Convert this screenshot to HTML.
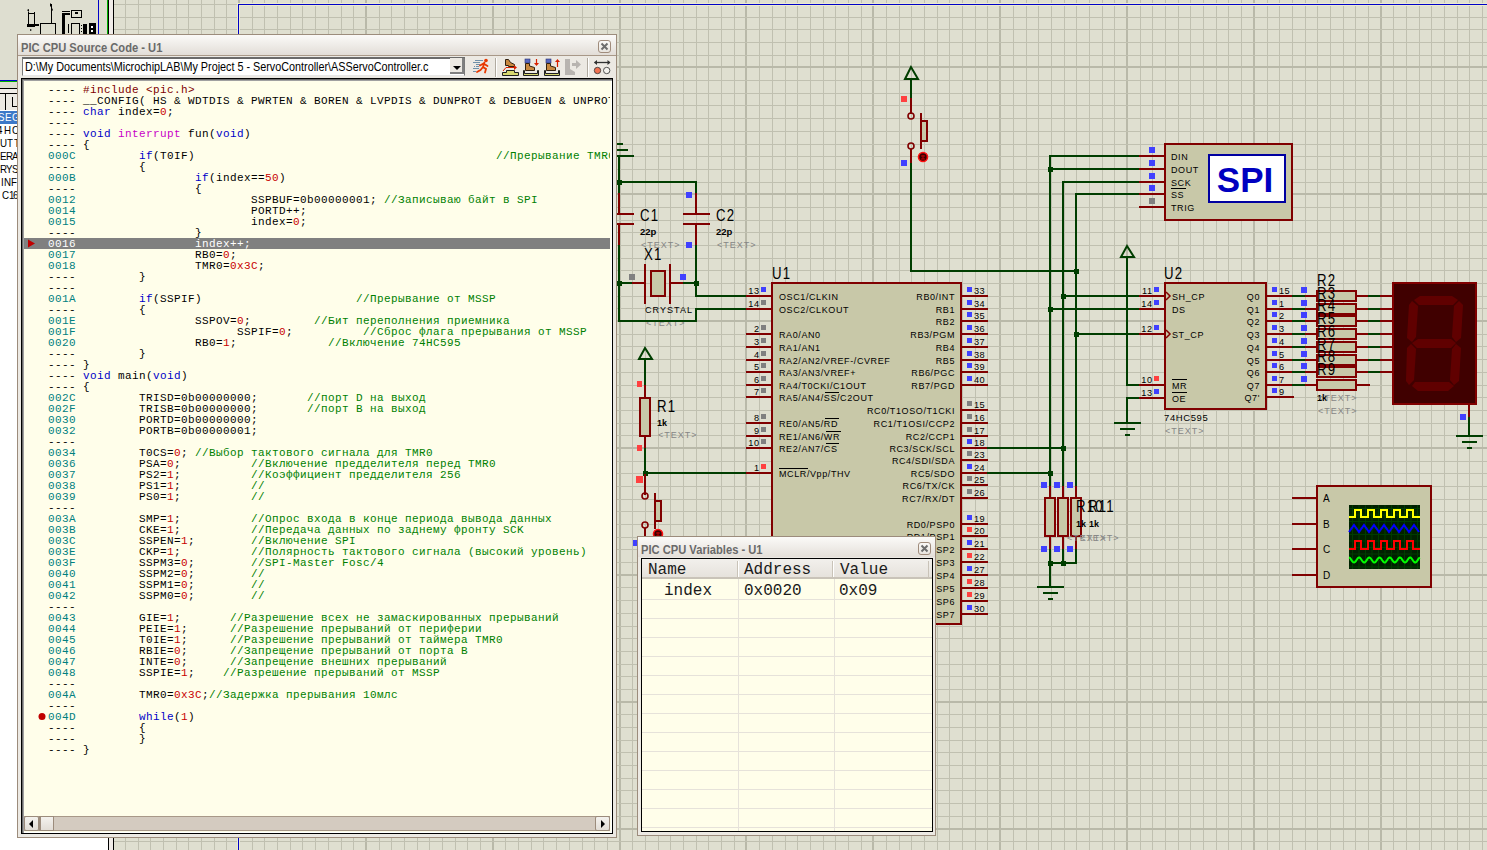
<!DOCTYPE html><html><head><meta charset="utf-8"><style>
*{margin:0;padding:0;box-sizing:border-box}
html,body{width:1487px;height:850px;overflow:hidden;background:#dfdfd0;font-family:"Liberation Sans",sans-serif}
.abs{position:absolute}
#sch{position:absolute;left:0;top:0}
.win{position:absolute;border:1px solid #9c8c7c;background:#ece9e3}
.ttl{position:absolute;font:bold 12px/14px "Liberation Sans",sans-serif;color:#6a6a6a;white-space:nowrap;transform:scaleX(0.93);transform-origin:0 0}
.code{position:absolute;left:21px;top:78px;width:592px;height:756px;background:#fffeea;border:1px solid #000;box-shadow:inset 1px 1px 0 #6a6a6a, inset 2px 2px 0 #a0a0a0, inset -1px -1px 0 #fff;overflow:hidden}
.cl{position:absolute;overflow:hidden;left:48px;width:562px;height:11px;white-space:pre;font:11px/11px "Liberation Mono",monospace;letter-spacing:0.4px;color:#000}
.cl.hl{color:#fff}
.cl.hl span{color:#fff!important}
.a{color:#008080}.k{color:#0000c8}.m{color:#c800c8}.n{color:#c80000}.c{color:#008000}.p{color:#800000}

.vt{position:absolute;font:16px/18px "Liberation Mono",monospace;color:#1a1a1a;white-space:pre}
.st{font-family:"Liberation Sans",sans-serif}
</style></head><body><svg id="sch" width="1487" height="850" viewBox="0 0 1487 850">
<rect x="111" y="0" width="2" height="850" fill="#b9b9a9"/>
<rect x="125" y="0" width="1" height="850" fill="#c0c0b0"/>
<rect x="138" y="0" width="1" height="850" fill="#c0c0b0"/>
<rect x="150" y="0" width="1" height="850" fill="#c0c0b0"/>
<rect x="163" y="0" width="1" height="850" fill="#c0c0b0"/>
<rect x="176" y="0" width="1" height="850" fill="#c0c0b0"/>
<rect x="188" y="0" width="1" height="850" fill="#c0c0b0"/>
<rect x="201" y="0" width="1" height="850" fill="#c0c0b0"/>
<rect x="214" y="0" width="1" height="850" fill="#c0c0b0"/>
<rect x="226" y="0" width="1" height="850" fill="#c0c0b0"/>
<rect x="238" y="0" width="2" height="850" fill="#b9b9a9"/>
<rect x="252" y="0" width="1" height="850" fill="#c0c0b0"/>
<rect x="264" y="0" width="1" height="850" fill="#c0c0b0"/>
<rect x="277" y="0" width="1" height="850" fill="#c0c0b0"/>
<rect x="290" y="0" width="1" height="850" fill="#c0c0b0"/>
<rect x="302" y="0" width="1" height="850" fill="#c0c0b0"/>
<rect x="315" y="0" width="1" height="850" fill="#c0c0b0"/>
<rect x="328" y="0" width="1" height="850" fill="#c0c0b0"/>
<rect x="341" y="0" width="1" height="850" fill="#c0c0b0"/>
<rect x="353" y="0" width="1" height="850" fill="#c0c0b0"/>
<rect x="365" y="0" width="2" height="850" fill="#b9b9a9"/>
<rect x="379" y="0" width="1" height="850" fill="#c0c0b0"/>
<rect x="391" y="0" width="1" height="850" fill="#c0c0b0"/>
<rect x="404" y="0" width="1" height="850" fill="#c0c0b0"/>
<rect x="417" y="0" width="1" height="850" fill="#c0c0b0"/>
<rect x="429" y="0" width="1" height="850" fill="#c0c0b0"/>
<rect x="442" y="0" width="1" height="850" fill="#c0c0b0"/>
<rect x="455" y="0" width="1" height="850" fill="#c0c0b0"/>
<rect x="467" y="0" width="1" height="850" fill="#c0c0b0"/>
<rect x="480" y="0" width="1" height="850" fill="#c0c0b0"/>
<rect x="492" y="0" width="2" height="850" fill="#b9b9a9"/>
<rect x="505" y="0" width="1" height="850" fill="#c0c0b0"/>
<rect x="518" y="0" width="1" height="850" fill="#c0c0b0"/>
<rect x="531" y="0" width="1" height="850" fill="#c0c0b0"/>
<rect x="543" y="0" width="1" height="850" fill="#c0c0b0"/>
<rect x="556" y="0" width="1" height="850" fill="#c0c0b0"/>
<rect x="569" y="0" width="1" height="850" fill="#c0c0b0"/>
<rect x="582" y="0" width="1" height="850" fill="#c0c0b0"/>
<rect x="594" y="0" width="1" height="850" fill="#c0c0b0"/>
<rect x="607" y="0" width="1" height="850" fill="#c0c0b0"/>
<rect x="619" y="0" width="2" height="850" fill="#b9b9a9"/>
<rect x="632" y="0" width="1" height="850" fill="#c0c0b0"/>
<rect x="645" y="0" width="1" height="850" fill="#c0c0b0"/>
<rect x="658" y="0" width="1" height="850" fill="#c0c0b0"/>
<rect x="670" y="0" width="1" height="850" fill="#c0c0b0"/>
<rect x="683" y="0" width="1" height="850" fill="#c0c0b0"/>
<rect x="696" y="0" width="1" height="850" fill="#c0c0b0"/>
<rect x="708" y="0" width="1" height="850" fill="#c0c0b0"/>
<rect x="721" y="0" width="1" height="850" fill="#c0c0b0"/>
<rect x="734" y="0" width="1" height="850" fill="#c0c0b0"/>
<rect x="745" y="0" width="2" height="850" fill="#b9b9a9"/>
<rect x="759" y="0" width="1" height="850" fill="#c0c0b0"/>
<rect x="772" y="0" width="1" height="850" fill="#c0c0b0"/>
<rect x="785" y="0" width="1" height="850" fill="#c0c0b0"/>
<rect x="797" y="0" width="1" height="850" fill="#c0c0b0"/>
<rect x="810" y="0" width="1" height="850" fill="#c0c0b0"/>
<rect x="823" y="0" width="1" height="850" fill="#c0c0b0"/>
<rect x="835" y="0" width="1" height="850" fill="#c0c0b0"/>
<rect x="848" y="0" width="1" height="850" fill="#c0c0b0"/>
<rect x="861" y="0" width="1" height="850" fill="#c0c0b0"/>
<rect x="872" y="0" width="2" height="850" fill="#b9b9a9"/>
<rect x="886" y="0" width="1" height="850" fill="#c0c0b0"/>
<rect x="899" y="0" width="1" height="850" fill="#c0c0b0"/>
<rect x="911" y="0" width="1" height="850" fill="#c0c0b0"/>
<rect x="924" y="0" width="1" height="850" fill="#c0c0b0"/>
<rect x="937" y="0" width="1" height="850" fill="#c0c0b0"/>
<rect x="949" y="0" width="1" height="850" fill="#c0c0b0"/>
<rect x="962" y="0" width="1" height="850" fill="#c0c0b0"/>
<rect x="975" y="0" width="1" height="850" fill="#c0c0b0"/>
<rect x="987" y="0" width="1" height="850" fill="#c0c0b0"/>
<rect x="999" y="0" width="2" height="850" fill="#b9b9a9"/>
<rect x="1013" y="0" width="1" height="850" fill="#c0c0b0"/>
<rect x="1026" y="0" width="1" height="850" fill="#c0c0b0"/>
<rect x="1038" y="0" width="1" height="850" fill="#c0c0b0"/>
<rect x="1051" y="0" width="1" height="850" fill="#c0c0b0"/>
<rect x="1064" y="0" width="1" height="850" fill="#c0c0b0"/>
<rect x="1076" y="0" width="1" height="850" fill="#c0c0b0"/>
<rect x="1089" y="0" width="1" height="850" fill="#c0c0b0"/>
<rect x="1102" y="0" width="1" height="850" fill="#c0c0b0"/>
<rect x="1114" y="0" width="1" height="850" fill="#c0c0b0"/>
<rect x="1126" y="0" width="2" height="850" fill="#b9b9a9"/>
<rect x="1140" y="0" width="1" height="850" fill="#c0c0b0"/>
<rect x="1152" y="0" width="1" height="850" fill="#c0c0b0"/>
<rect x="1165" y="0" width="1" height="850" fill="#c0c0b0"/>
<rect x="1178" y="0" width="1" height="850" fill="#c0c0b0"/>
<rect x="1190" y="0" width="1" height="850" fill="#c0c0b0"/>
<rect x="1203" y="0" width="1" height="850" fill="#c0c0b0"/>
<rect x="1216" y="0" width="1" height="850" fill="#c0c0b0"/>
<rect x="1228" y="0" width="1" height="850" fill="#c0c0b0"/>
<rect x="1241" y="0" width="1" height="850" fill="#c0c0b0"/>
<rect x="1253" y="0" width="2" height="850" fill="#b9b9a9"/>
<rect x="1267" y="0" width="1" height="850" fill="#c0c0b0"/>
<rect x="1279" y="0" width="1" height="850" fill="#c0c0b0"/>
<rect x="1292" y="0" width="1" height="850" fill="#c0c0b0"/>
<rect x="1305" y="0" width="1" height="850" fill="#c0c0b0"/>
<rect x="1317" y="0" width="1" height="850" fill="#c0c0b0"/>
<rect x="1330" y="0" width="1" height="850" fill="#c0c0b0"/>
<rect x="1343" y="0" width="1" height="850" fill="#c0c0b0"/>
<rect x="1355" y="0" width="1" height="850" fill="#c0c0b0"/>
<rect x="1368" y="0" width="1" height="850" fill="#c0c0b0"/>
<rect x="1380" y="0" width="2" height="850" fill="#b9b9a9"/>
<rect x="1393" y="0" width="1" height="850" fill="#c0c0b0"/>
<rect x="1406" y="0" width="1" height="850" fill="#c0c0b0"/>
<rect x="1419" y="0" width="1" height="850" fill="#c0c0b0"/>
<rect x="1431" y="0" width="1" height="850" fill="#c0c0b0"/>
<rect x="1444" y="0" width="1" height="850" fill="#c0c0b0"/>
<rect x="1457" y="0" width="1" height="850" fill="#c0c0b0"/>
<rect x="1469" y="0" width="1" height="850" fill="#c0c0b0"/>
<rect x="1482" y="0" width="1" height="850" fill="#c0c0b0"/>
<rect x="0" y="4" width="1487" height="1" fill="#c0c0b0"/>
<rect x="0" y="17" width="1487" height="1" fill="#c0c0b0"/>
<rect x="0" y="29" width="1487" height="1" fill="#c0c0b0"/>
<rect x="0" y="42" width="1487" height="1" fill="#c0c0b0"/>
<rect x="0" y="55" width="1487" height="1" fill="#c0c0b0"/>
<rect x="0" y="66" width="1487" height="2" fill="#b9b9a9"/>
<rect x="0" y="80" width="1487" height="1" fill="#c0c0b0"/>
<rect x="0" y="93" width="1487" height="1" fill="#c0c0b0"/>
<rect x="0" y="105" width="1487" height="1" fill="#c0c0b0"/>
<rect x="0" y="118" width="1487" height="1" fill="#c0c0b0"/>
<rect x="0" y="131" width="1487" height="1" fill="#c0c0b0"/>
<rect x="0" y="144" width="1487" height="1" fill="#c0c0b0"/>
<rect x="0" y="156" width="1487" height="1" fill="#c0c0b0"/>
<rect x="0" y="169" width="1487" height="1" fill="#c0c0b0"/>
<rect x="0" y="182" width="1487" height="1" fill="#c0c0b0"/>
<rect x="0" y="193" width="1487" height="2" fill="#b9b9a9"/>
<rect x="0" y="207" width="1487" height="1" fill="#c0c0b0"/>
<rect x="0" y="220" width="1487" height="1" fill="#c0c0b0"/>
<rect x="0" y="232" width="1487" height="1" fill="#c0c0b0"/>
<rect x="0" y="245" width="1487" height="1" fill="#c0c0b0"/>
<rect x="0" y="258" width="1487" height="1" fill="#c0c0b0"/>
<rect x="0" y="270" width="1487" height="1" fill="#c0c0b0"/>
<rect x="0" y="283" width="1487" height="1" fill="#c0c0b0"/>
<rect x="0" y="296" width="1487" height="1" fill="#c0c0b0"/>
<rect x="0" y="308" width="1487" height="1" fill="#c0c0b0"/>
<rect x="0" y="320" width="1487" height="2" fill="#b9b9a9"/>
<rect x="0" y="334" width="1487" height="1" fill="#c0c0b0"/>
<rect x="0" y="346" width="1487" height="1" fill="#c0c0b0"/>
<rect x="0" y="359" width="1487" height="1" fill="#c0c0b0"/>
<rect x="0" y="372" width="1487" height="1" fill="#c0c0b0"/>
<rect x="0" y="385" width="1487" height="1" fill="#c0c0b0"/>
<rect x="0" y="397" width="1487" height="1" fill="#c0c0b0"/>
<rect x="0" y="410" width="1487" height="1" fill="#c0c0b0"/>
<rect x="0" y="423" width="1487" height="1" fill="#c0c0b0"/>
<rect x="0" y="435" width="1487" height="1" fill="#c0c0b0"/>
<rect x="0" y="447" width="1487" height="2" fill="#b9b9a9"/>
<rect x="0" y="461" width="1487" height="1" fill="#c0c0b0"/>
<rect x="0" y="473" width="1487" height="1" fill="#c0c0b0"/>
<rect x="0" y="486" width="1487" height="1" fill="#c0c0b0"/>
<rect x="0" y="499" width="1487" height="1" fill="#c0c0b0"/>
<rect x="0" y="511" width="1487" height="1" fill="#c0c0b0"/>
<rect x="0" y="524" width="1487" height="1" fill="#c0c0b0"/>
<rect x="0" y="537" width="1487" height="1" fill="#c0c0b0"/>
<rect x="0" y="549" width="1487" height="1" fill="#c0c0b0"/>
<rect x="0" y="562" width="1487" height="1" fill="#c0c0b0"/>
<rect x="0" y="574" width="1487" height="2" fill="#b9b9a9"/>
<rect x="0" y="587" width="1487" height="1" fill="#c0c0b0"/>
<rect x="0" y="600" width="1487" height="1" fill="#c0c0b0"/>
<rect x="0" y="613" width="1487" height="1" fill="#c0c0b0"/>
<rect x="0" y="626" width="1487" height="1" fill="#c0c0b0"/>
<rect x="0" y="638" width="1487" height="1" fill="#c0c0b0"/>
<rect x="0" y="651" width="1487" height="1" fill="#c0c0b0"/>
<rect x="0" y="664" width="1487" height="1" fill="#c0c0b0"/>
<rect x="0" y="676" width="1487" height="1" fill="#c0c0b0"/>
<rect x="0" y="689" width="1487" height="1" fill="#c0c0b0"/>
<rect x="0" y="701" width="1487" height="2" fill="#b9b9a9"/>
<rect x="0" y="714" width="1487" height="1" fill="#c0c0b0"/>
<rect x="0" y="727" width="1487" height="1" fill="#c0c0b0"/>
<rect x="0" y="740" width="1487" height="1" fill="#c0c0b0"/>
<rect x="0" y="752" width="1487" height="1" fill="#c0c0b0"/>
<rect x="0" y="765" width="1487" height="1" fill="#c0c0b0"/>
<rect x="0" y="778" width="1487" height="1" fill="#c0c0b0"/>
<rect x="0" y="790" width="1487" height="1" fill="#c0c0b0"/>
<rect x="0" y="803" width="1487" height="1" fill="#c0c0b0"/>
<rect x="0" y="816" width="1487" height="1" fill="#c0c0b0"/>
<rect x="0" y="828" width="1487" height="2" fill="#b9b9a9"/>
<rect x="0" y="841" width="1487" height="1" fill="#c0c0b0"/>
<rect x="237" y="3" width="1250" height="3" fill="#ebebd0" />
<rect x="237" y="3" width="3" height="850" fill="#ebebd0" />
<rect x="238" y="4" width="1249" height="1" fill="#0000c8" />
<rect x="238" y="4" width="1" height="850" fill="#0000c8" />
<rect x="617" y="143" width="6" height="2" fill="#003e00" />
<rect x="617" y="149" width="11" height="2" fill="#003e00" />
<rect x="617" y="155" width="17" height="2" fill="#003e00" />
<rect x="618" y="155" width="2" height="40" fill="#003e00" />
<rect x="618" y="193" width="2" height="22" fill="#800000" />
<rect x="618" y="225" width="2" height="22" fill="#800000" />
<rect x="618" y="245" width="2" height="77" fill="#003e00" />
<rect x="617" y="213" width="17" height="2" fill="#800000" />
<rect x="617" y="223" width="17" height="2" fill="#800000" />
<rect x="618" y="181" width="79" height="2" fill="#003e00" />
<rect x="617" y="180" width="5" height="5" fill="#003e00" />
<rect x="695" y="181" width="2" height="14" fill="#003e00" />
<rect x="695" y="193" width="2" height="22" fill="#800000" />
<rect x="683" y="213" width="27" height="2" fill="#800000" />
<rect x="683" y="223" width="27" height="2" fill="#800000" />
<rect x="695" y="225" width="2" height="22" fill="#800000" />
<rect x="695" y="245" width="2" height="52" fill="#003e00" />
<rect x="686" y="192" width="6" height="6" fill="#4040ff" />
<rect x="686" y="242" width="6" height="6" fill="#4040ff" />
<text transform="translate(640,221) scale(0.8,1)" x="0" y="0" font-size="16.5" fill="#000" letter-spacing="1.5" class="st">C1</text>
<text x="640" y="235" font-size="9.5" fill="#000" text-anchor="start" font-weight="bold" class="st" >22p</text>
<text x="641" y="248" font-size="9" fill="#868686" letter-spacing="1" class="st">&lt;TEXT&gt;</text>
<text transform="translate(716,221) scale(0.8,1)" x="0" y="0" font-size="16.5" fill="#000" letter-spacing="1.5" class="st">C2</text>
<text x="716" y="235" font-size="9.5" fill="#000" text-anchor="start" font-weight="bold" class="st" >22p</text>
<text x="717" y="248" font-size="9" fill="#868686" letter-spacing="1" class="st">&lt;TEXT&gt;</text>
<text transform="translate(644,260) scale(0.8,1)" x="0" y="0" font-size="16.5" fill="#000" letter-spacing="1.5" class="st">X1</text>
<rect x="618" y="282" width="16" height="2" fill="#003e00" />
<rect x="632" y="282" width="14" height="2" fill="#800000" />
<rect x="644" y="264" width="2" height="40" fill="#800000" />
<rect x="650" y="270" width="16" height="27" fill="#800000" />
<rect x="652" y="272" width="12" height="23" fill="#c8c8a8" />
<rect x="669" y="264" width="2" height="40" fill="#800000" />
<rect x="670" y="282" width="15" height="2" fill="#800000" />
<rect x="683" y="282" width="14" height="2" fill="#003e00" />
<rect x="617" y="281" width="5" height="5" fill="#003e00" />
<rect x="694" y="281" width="5" height="5" fill="#003e00" />
<rect x="629" y="274" width="6" height="6" fill="#808080" />
<rect x="680" y="274" width="6" height="6" fill="#4040ff" />
<text x="645" y="313" font-size="9" fill="#000" text-anchor="start" font-weight="normal" class="st" letter-spacing="1.05">CRYSTAL</text>
<text x="646" y="326" font-size="9" fill="#868686" letter-spacing="1" class="st">&lt;TEXT&gt;</text>
<rect x="695" y="295" width="53" height="2" fill="#003e00" />
<rect x="695" y="308" width="53" height="2" fill="#003e00" />
<rect x="695" y="308" width="2" height="14" fill="#003e00" />
<rect x="618" y="320" width="79" height="2" fill="#003e00" />
<polygon points="911,67 905,79 918,79" fill="none" stroke="#003e00" stroke-width="2" />
<rect x="910" y="79" width="2" height="21" fill="#003e00" />
<rect x="910" y="98" width="2" height="16" fill="#800000" />
<circle cx="911" cy="116" r="3" fill="none" stroke="#800000" stroke-width="1.6"/>
<circle cx="911" cy="146" r="3" fill="none" stroke="#800000" stroke-width="1.6"/>
<rect x="920" y="113" width="2" height="36" fill="#800000" />
<rect x="921" y="120" width="7" height="22" fill="#800000" />
<rect x="922" y="122" width="4" height="18" fill="#c8c8a8" />
<rect x="910" y="149" width="2" height="16" fill="#800000" />
<rect x="910" y="163" width="2" height="109" fill="#003e00" />
<rect x="910" y="270" width="167" height="2" fill="#003e00" />
<rect x="901" y="96" width="6" height="6" fill="#ff4040" />
<rect x="901" y="160" width="6" height="6" fill="#4040ff" />
<circle cx="923" cy="157" r="4.5" fill="#3a0000" stroke="#ff1010" stroke-width="1.6"/>
<path d="M921 156h4M923 155v4M921 159h4" stroke="#c00000" stroke-width="1"/>
<polygon points="645,348 639,359 652,359" fill="none" stroke="#003e00" stroke-width="2" />
<rect x="644" y="359" width="2" height="28" fill="#003e00" />
<rect x="644" y="385" width="2" height="14" fill="#800000" />
<rect x="639" y="397" width="12" height="40" fill="#800000" />
<rect x="641" y="399" width="8" height="36" fill="#c8c8a8" />
<rect x="644" y="436" width="2" height="14" fill="#800000" />
<rect x="644" y="448" width="2" height="27" fill="#003e00" />
<rect x="644" y="472" width="104" height="2" fill="#003e00" />
<rect x="643" y="471" width="5" height="5" fill="#003e00" />
<rect x="637" y="381" width="5" height="6" fill="#ff4040" />
<rect x="637" y="445" width="5" height="6" fill="#ff4040" />
<rect x="636" y="476" width="7" height="7" fill="#ff4040" />
<text transform="translate(657,412) scale(0.8,1)" x="0" y="0" font-size="16.5" fill="#000" letter-spacing="1.5" class="st">R1</text>
<text x="657" y="426" font-size="9" fill="#000" text-anchor="start" font-weight="bold" class="st" >1k</text>
<text x="658" y="438" font-size="9" fill="#868686" letter-spacing="1" class="st">&lt;TEXT&gt;</text>
<rect x="644" y="474" width="2" height="21" fill="#800000" />
<circle cx="645" cy="496" r="3" fill="none" stroke="#800000" stroke-width="1.6"/>
<circle cx="645" cy="525" r="3" fill="none" stroke="#800000" stroke-width="1.6"/>
<rect x="654" y="493" width="2" height="36" fill="#800000" />
<rect x="655" y="500" width="7" height="22" fill="#800000" />
<rect x="656" y="502" width="4" height="18" fill="#c8c8a8" />
<rect x="644" y="528" width="2" height="19" fill="#800000" />
<circle cx="658" cy="534" r="4.5" fill="#3a0000" stroke="#ff1010" stroke-width="1.6"/>
<path d="M656 533h4M658 532v4M656 536h4" stroke="#c00000" stroke-width="1"/>
<rect x="633" y="540" width="5" height="6" fill="#4040ff" />
<rect x="771" y="282" width="191" height="343" fill="#800000" />
<rect x="773" y="284" width="187" height="339" fill="#c8c8a8" />
<text transform="translate(772,279) scale(0.8,1)" x="0" y="0" font-size="16.5" fill="#000" letter-spacing="1.5" class="st">U1</text>
<rect x="746" y="295" width="26" height="2" fill="#800000" />
<rect x="761" y="287" width="5" height="5" fill="#4040ff" />
<text x="759.5" y="294" font-size="9.2" fill="#000" text-anchor="end" font-weight="normal" class="st" letter-spacing="0.5">13</text>
<text x="779" y="300" font-size="9" fill="#000" text-anchor="start" font-weight="normal" class="st" letter-spacing="0.6">OSC1/CLKIN</text>
<rect x="746" y="308" width="26" height="2" fill="#800000" />
<rect x="761" y="300" width="5" height="5" fill="#808080" />
<text x="759.5" y="307" font-size="9.2" fill="#000" text-anchor="end" font-weight="normal" class="st" letter-spacing="0.5">14</text>
<text x="779" y="313" font-size="9" fill="#000" text-anchor="start" font-weight="normal" class="st" letter-spacing="0.6">OSC2/CLKOUT</text>
<rect x="746" y="333" width="26" height="2" fill="#800000" />
<rect x="761" y="325" width="5" height="5" fill="#808080" />
<text x="759.5" y="332" font-size="9.2" fill="#000" text-anchor="end" font-weight="normal" class="st" letter-spacing="0.5">2</text>
<text x="779" y="338" font-size="9" fill="#000" text-anchor="start" font-weight="normal" class="st" letter-spacing="0.6">RA0/AN0</text>
<rect x="746" y="346" width="26" height="2" fill="#800000" />
<rect x="761" y="338" width="5" height="5" fill="#808080" />
<text x="759.5" y="345" font-size="9.2" fill="#000" text-anchor="end" font-weight="normal" class="st" letter-spacing="0.5">3</text>
<text x="779" y="351" font-size="9" fill="#000" text-anchor="start" font-weight="normal" class="st" letter-spacing="0.6">RA1/AN1</text>
<rect x="746" y="359" width="26" height="2" fill="#800000" />
<rect x="761" y="351" width="5" height="5" fill="#808080" />
<text x="759.5" y="358" font-size="9.2" fill="#000" text-anchor="end" font-weight="normal" class="st" letter-spacing="0.5">4</text>
<text x="779" y="364" font-size="9" fill="#000" text-anchor="start" font-weight="normal" class="st" letter-spacing="0.6">RA2/AN2/VREF-/CVREF</text>
<rect x="746" y="371" width="26" height="2" fill="#800000" />
<rect x="761" y="363" width="5" height="5" fill="#808080" />
<text x="759.5" y="370" font-size="9.2" fill="#000" text-anchor="end" font-weight="normal" class="st" letter-spacing="0.5">5</text>
<text x="779" y="376" font-size="9" fill="#000" text-anchor="start" font-weight="normal" class="st" letter-spacing="0.6">RA3/AN3/VREF+</text>
<rect x="746" y="384" width="26" height="2" fill="#800000" />
<rect x="761" y="376" width="5" height="5" fill="#808080" />
<text x="759.5" y="383" font-size="9.2" fill="#000" text-anchor="end" font-weight="normal" class="st" letter-spacing="0.5">6</text>
<text x="779" y="389" font-size="9" fill="#000" text-anchor="start" font-weight="normal" class="st" letter-spacing="0.6">RA4/T0CKI/C1OUT</text>
<rect x="746" y="396" width="26" height="2" fill="#800000" />
<rect x="761" y="388" width="5" height="5" fill="#808080" />
<text x="759.5" y="395" font-size="9.2" fill="#000" text-anchor="end" font-weight="normal" class="st" letter-spacing="0.5">7</text>
<text x="779" y="401" font-size="9" fill="#000" text-anchor="start" font-weight="normal" class="st" letter-spacing="0.6">RA5/AN4/SS/C2OUT</text>
<rect x="746" y="422" width="26" height="2" fill="#800000" />
<rect x="761" y="414" width="5" height="5" fill="#808080" />
<text x="759.5" y="421" font-size="9.2" fill="#000" text-anchor="end" font-weight="normal" class="st" letter-spacing="0.5">8</text>
<text x="779" y="427" font-size="9" fill="#000" text-anchor="start" font-weight="normal" class="st" letter-spacing="0.6">RE0/AN5/RD</text>
<rect x="746" y="435" width="26" height="2" fill="#800000" />
<rect x="761" y="427" width="5" height="5" fill="#808080" />
<text x="759.5" y="434" font-size="9.2" fill="#000" text-anchor="end" font-weight="normal" class="st" letter-spacing="0.5">9</text>
<text x="779" y="440" font-size="9" fill="#000" text-anchor="start" font-weight="normal" class="st" letter-spacing="0.6">RE1/AN6/WR</text>
<rect x="746" y="447" width="26" height="2" fill="#800000" />
<rect x="761" y="439" width="5" height="5" fill="#808080" />
<text x="759.5" y="446" font-size="9.2" fill="#000" text-anchor="end" font-weight="normal" class="st" letter-spacing="0.5">10</text>
<text x="779" y="452" font-size="9" fill="#000" text-anchor="start" font-weight="normal" class="st" letter-spacing="0.6">RE2/AN7/CS</text>
<rect x="746" y="472" width="26" height="2" fill="#800000" />
<rect x="761" y="464" width="5" height="5" fill="#ff4040" />
<text x="759.5" y="471" font-size="9.2" fill="#000" text-anchor="end" font-weight="normal" class="st" letter-spacing="0.5">1</text>
<text x="779" y="477" font-size="9" fill="#000" text-anchor="start" font-weight="normal" class="st" letter-spacing="0.6">MCLR/Vpp/THV</text>
<rect x="825" y="392" width="14" height="1" fill="#000" />
<rect x="825" y="418" width="14" height="1" fill="#000" />
<rect x="826" y="431" width="15" height="1" fill="#000" />
<rect x="826" y="443" width="13" height="1" fill="#000" />
<rect x="779" y="468" width="29" height="1" fill="#000" />
<rect x="961" y="295" width="27" height="2" fill="#800000" />
<rect x="967" y="287" width="5" height="5" fill="#4040ff" />
<text x="974" y="294" font-size="9.2" fill="#000" text-anchor="start" font-weight="normal" class="st" letter-spacing="0.5">33</text>
<text x="955" y="300" font-size="9" fill="#000" text-anchor="end" font-weight="normal" class="st" letter-spacing="0.6">RB0/INT</text>
<rect x="961" y="308" width="27" height="2" fill="#800000" />
<rect x="967" y="300" width="5" height="5" fill="#4040ff" />
<text x="974" y="307" font-size="9.2" fill="#000" text-anchor="start" font-weight="normal" class="st" letter-spacing="0.5">34</text>
<text x="955" y="313" font-size="9" fill="#000" text-anchor="end" font-weight="normal" class="st" letter-spacing="0.6">RB1</text>
<rect x="961" y="320" width="27" height="2" fill="#800000" />
<rect x="967" y="312" width="5" height="5" fill="#4040ff" />
<text x="974" y="319" font-size="9.2" fill="#000" text-anchor="start" font-weight="normal" class="st" letter-spacing="0.5">35</text>
<text x="955" y="325" font-size="9" fill="#000" text-anchor="end" font-weight="normal" class="st" letter-spacing="0.6">RB2</text>
<rect x="961" y="333" width="27" height="2" fill="#800000" />
<rect x="967" y="325" width="5" height="5" fill="#4040ff" />
<text x="974" y="332" font-size="9.2" fill="#000" text-anchor="start" font-weight="normal" class="st" letter-spacing="0.5">36</text>
<text x="955" y="338" font-size="9" fill="#000" text-anchor="end" font-weight="normal" class="st" letter-spacing="0.6">RB3/PGM</text>
<rect x="961" y="346" width="27" height="2" fill="#800000" />
<rect x="967" y="338" width="5" height="5" fill="#4040ff" />
<text x="974" y="345" font-size="9.2" fill="#000" text-anchor="start" font-weight="normal" class="st" letter-spacing="0.5">37</text>
<text x="955" y="351" font-size="9" fill="#000" text-anchor="end" font-weight="normal" class="st" letter-spacing="0.6">RB4</text>
<rect x="961" y="359" width="27" height="2" fill="#800000" />
<rect x="967" y="351" width="5" height="5" fill="#4040ff" />
<text x="974" y="358" font-size="9.2" fill="#000" text-anchor="start" font-weight="normal" class="st" letter-spacing="0.5">38</text>
<text x="955" y="364" font-size="9" fill="#000" text-anchor="end" font-weight="normal" class="st" letter-spacing="0.6">RB5</text>
<rect x="961" y="371" width="27" height="2" fill="#800000" />
<rect x="967" y="363" width="5" height="5" fill="#4040ff" />
<text x="974" y="370" font-size="9.2" fill="#000" text-anchor="start" font-weight="normal" class="st" letter-spacing="0.5">39</text>
<text x="955" y="376" font-size="9" fill="#000" text-anchor="end" font-weight="normal" class="st" letter-spacing="0.6">RB6/PGC</text>
<rect x="961" y="384" width="27" height="2" fill="#800000" />
<rect x="967" y="376" width="5" height="5" fill="#4040ff" />
<text x="974" y="383" font-size="9.2" fill="#000" text-anchor="start" font-weight="normal" class="st" letter-spacing="0.5">40</text>
<text x="955" y="389" font-size="9" fill="#000" text-anchor="end" font-weight="normal" class="st" letter-spacing="0.6">RB7/PGD</text>
<rect x="961" y="409" width="27" height="2" fill="#800000" />
<rect x="967" y="401" width="5" height="5" fill="#808080" />
<text x="974" y="408" font-size="9.2" fill="#000" text-anchor="start" font-weight="normal" class="st" letter-spacing="0.5">15</text>
<text x="955" y="414" font-size="9" fill="#000" text-anchor="end" font-weight="normal" class="st" letter-spacing="0.6">RC0/T1OSO/T1CKI</text>
<rect x="961" y="422" width="27" height="2" fill="#800000" />
<rect x="967" y="414" width="5" height="5" fill="#808080" />
<text x="974" y="421" font-size="9.2" fill="#000" text-anchor="start" font-weight="normal" class="st" letter-spacing="0.5">16</text>
<text x="955" y="427" font-size="9" fill="#000" text-anchor="end" font-weight="normal" class="st" letter-spacing="0.6">RC1/T1OSI/CCP2</text>
<rect x="961" y="435" width="27" height="2" fill="#800000" />
<rect x="967" y="427" width="5" height="5" fill="#808080" />
<text x="974" y="434" font-size="9.2" fill="#000" text-anchor="start" font-weight="normal" class="st" letter-spacing="0.5">17</text>
<text x="955" y="440" font-size="9" fill="#000" text-anchor="end" font-weight="normal" class="st" letter-spacing="0.6">RC2/CCP1</text>
<rect x="961" y="447" width="27" height="2" fill="#800000" />
<rect x="967" y="439" width="5" height="5" fill="#4040ff" />
<text x="974" y="446" font-size="9.2" fill="#000" text-anchor="start" font-weight="normal" class="st" letter-spacing="0.5">18</text>
<text x="955" y="452" font-size="9" fill="#000" text-anchor="end" font-weight="normal" class="st" letter-spacing="0.6">RC3/SCK/SCL</text>
<rect x="961" y="459" width="27" height="2" fill="#800000" />
<rect x="967" y="451" width="5" height="5" fill="#808080" />
<text x="974" y="458" font-size="9.2" fill="#000" text-anchor="start" font-weight="normal" class="st" letter-spacing="0.5">23</text>
<text x="955" y="464" font-size="9" fill="#000" text-anchor="end" font-weight="normal" class="st" letter-spacing="0.6">RC4/SDI/SDA</text>
<rect x="961" y="472" width="27" height="2" fill="#800000" />
<rect x="967" y="464" width="5" height="5" fill="#4040ff" />
<text x="974" y="471" font-size="9.2" fill="#000" text-anchor="start" font-weight="normal" class="st" letter-spacing="0.5">24</text>
<text x="955" y="477" font-size="9" fill="#000" text-anchor="end" font-weight="normal" class="st" letter-spacing="0.6">RC5/SDO</text>
<rect x="961" y="484" width="27" height="2" fill="#800000" />
<rect x="967" y="476" width="5" height="5" fill="#808080" />
<text x="974" y="483" font-size="9.2" fill="#000" text-anchor="start" font-weight="normal" class="st" letter-spacing="0.5">25</text>
<text x="955" y="489" font-size="9" fill="#000" text-anchor="end" font-weight="normal" class="st" letter-spacing="0.6">RC6/TX/CK</text>
<rect x="961" y="497" width="27" height="2" fill="#800000" />
<rect x="967" y="489" width="5" height="5" fill="#808080" />
<text x="974" y="496" font-size="9.2" fill="#000" text-anchor="start" font-weight="normal" class="st" letter-spacing="0.5">26</text>
<text x="955" y="502" font-size="9" fill="#000" text-anchor="end" font-weight="normal" class="st" letter-spacing="0.6">RC7/RX/DT</text>
<rect x="961" y="523" width="27" height="2" fill="#800000" />
<rect x="967" y="515" width="5" height="5" fill="#4040ff" />
<text x="974" y="522" font-size="9.2" fill="#000" text-anchor="start" font-weight="normal" class="st" letter-spacing="0.5">19</text>
<text x="955" y="528" font-size="9" fill="#000" text-anchor="end" font-weight="normal" class="st" letter-spacing="0.6">RD0/PSP0</text>
<rect x="961" y="535" width="27" height="2" fill="#800000" />
<rect x="967" y="527" width="5" height="5" fill="#ff4040" />
<text x="974" y="534" font-size="9.2" fill="#000" text-anchor="start" font-weight="normal" class="st" letter-spacing="0.5">20</text>
<text x="955" y="540" font-size="9" fill="#000" text-anchor="end" font-weight="normal" class="st" letter-spacing="0.6">RD1/PSP1</text>
<rect x="961" y="548" width="27" height="2" fill="#800000" />
<rect x="967" y="540" width="5" height="5" fill="#4040ff" />
<text x="974" y="547" font-size="9.2" fill="#000" text-anchor="start" font-weight="normal" class="st" letter-spacing="0.5">21</text>
<text x="955" y="553" font-size="9" fill="#000" text-anchor="end" font-weight="normal" class="st" letter-spacing="0.6">RD2/PSP2</text>
<rect x="961" y="561" width="27" height="2" fill="#800000" />
<rect x="967" y="553" width="5" height="5" fill="#ff4040" />
<text x="974" y="560" font-size="9.2" fill="#000" text-anchor="start" font-weight="normal" class="st" letter-spacing="0.5">22</text>
<text x="955" y="566" font-size="9" fill="#000" text-anchor="end" font-weight="normal" class="st" letter-spacing="0.6">RD3/PSP3</text>
<rect x="961" y="574" width="27" height="2" fill="#800000" />
<rect x="967" y="566" width="5" height="5" fill="#4040ff" />
<text x="974" y="573" font-size="9.2" fill="#000" text-anchor="start" font-weight="normal" class="st" letter-spacing="0.5">27</text>
<text x="955" y="579" font-size="9" fill="#000" text-anchor="end" font-weight="normal" class="st" letter-spacing="0.6">RD4/PSP4</text>
<rect x="961" y="587" width="27" height="2" fill="#800000" />
<rect x="967" y="579" width="5" height="5" fill="#ff4040" />
<text x="974" y="586" font-size="9.2" fill="#000" text-anchor="start" font-weight="normal" class="st" letter-spacing="0.5">28</text>
<text x="955" y="592" font-size="9" fill="#000" text-anchor="end" font-weight="normal" class="st" letter-spacing="0.6">RD5/PSP5</text>
<rect x="961" y="600" width="27" height="2" fill="#800000" />
<rect x="967" y="592" width="5" height="5" fill="#ff4040" />
<text x="974" y="599" font-size="9.2" fill="#000" text-anchor="start" font-weight="normal" class="st" letter-spacing="0.5">29</text>
<text x="955" y="605" font-size="9" fill="#000" text-anchor="end" font-weight="normal" class="st" letter-spacing="0.6">RD6/PSP6</text>
<rect x="961" y="613" width="27" height="2" fill="#800000" />
<rect x="967" y="605" width="5" height="5" fill="#4040ff" />
<text x="974" y="612" font-size="9.2" fill="#000" text-anchor="start" font-weight="normal" class="st" letter-spacing="0.5">30</text>
<text x="955" y="618" font-size="9" fill="#000" text-anchor="end" font-weight="normal" class="st" letter-spacing="0.6">RD7/PSP7</text>
<rect x="1049" y="155" width="2" height="333" fill="#003e00" />
<rect x="1062" y="181" width="2" height="307" fill="#003e00" />
<rect x="1075" y="193" width="2" height="295" fill="#003e00" />
<rect x="1049" y="155" width="92" height="2" fill="#003e00" />
<rect x="1049" y="168" width="92" height="2" fill="#003e00" />
<rect x="1048" y="167" width="5" height="5" fill="#003e00" />
<rect x="1062" y="181" width="79" height="2" fill="#003e00" />
<rect x="1075" y="193" width="66" height="2" fill="#003e00" />
<rect x="1074" y="269" width="5" height="5" fill="#003e00" />
<rect x="1062" y="295" width="79" height="2" fill="#003e00" />
<rect x="1061" y="294" width="5" height="5" fill="#003e00" />
<rect x="1049" y="308" width="92" height="2" fill="#003e00" />
<rect x="1048" y="307" width="5" height="5" fill="#003e00" />
<rect x="1075" y="333" width="66" height="2" fill="#003e00" />
<rect x="1074" y="332" width="5" height="5" fill="#003e00" />
<rect x="987" y="447" width="77" height="2" fill="#003e00" />
<rect x="1061" y="446" width="5" height="5" fill="#003e00" />
<rect x="987" y="472" width="64" height="2" fill="#003e00" />
<rect x="1048" y="471" width="5" height="5" fill="#003e00" />
<rect x="1164" y="143" width="129" height="78" fill="#800000" />
<rect x="1166" y="145" width="125" height="74" fill="#c8c8a8" />
<rect x="1139" y="155" width="26" height="2" fill="#800000" />
<rect x="1149" y="147" width="6" height="6" fill="#4040ff" />
<text x="1171" y="160" font-size="9" fill="#000" text-anchor="start" font-weight="normal" class="st" letter-spacing="0.6">DIN</text>
<rect x="1139" y="168" width="26" height="2" fill="#800000" />
<rect x="1149" y="160" width="6" height="6" fill="#4040ff" />
<text x="1171" y="173" font-size="9" fill="#000" text-anchor="start" font-weight="normal" class="st" letter-spacing="0.6">DOUT</text>
<rect x="1139" y="181" width="26" height="2" fill="#800000" />
<rect x="1149" y="173" width="6" height="6" fill="#4040ff" />
<text x="1171" y="186" font-size="9" fill="#000" text-anchor="start" font-weight="normal" class="st" letter-spacing="0.6">SCK</text>
<rect x="1139" y="193" width="26" height="2" fill="#800000" />
<rect x="1149" y="185" width="6" height="6" fill="#4040ff" />
<text x="1171" y="198" font-size="9" fill="#000" text-anchor="start" font-weight="normal" class="st" letter-spacing="0.6">SS</text>
<rect x="1139" y="206" width="26" height="2" fill="#800000" />
<rect x="1149" y="198" width="6" height="6" fill="#808080" />
<text x="1171" y="211" font-size="9" fill="#000" text-anchor="start" font-weight="normal" class="st" letter-spacing="0.6">TRIG</text>
<rect x="1171" y="188" width="15" height="1" fill="#000" />
<rect x="1208" y="154" width="78" height="49" fill="#0000a0" />
<rect x="1210" y="156" width="74" height="45" fill="#ffffff" />
<text x="1245" y="192" font-size="35" fill="#0000c0" text-anchor="middle" font-weight="bold" class="st" >SPI</text>
<rect x="1164" y="282" width="103" height="128" fill="#800000" />
<rect x="1166" y="284" width="99" height="124" fill="#c8c8a8" />
<text transform="translate(1164,279) scale(0.8,1)" x="0" y="0" font-size="16.5" fill="#000" letter-spacing="1.5" class="st">U2</text>
<rect x="1139" y="295" width="26" height="2" fill="#800000" />
<rect x="1154" y="287" width="5" height="5" fill="#4040ff" />
<text x="1152.5" y="294" font-size="9.2" fill="#000" text-anchor="end" font-weight="normal" class="st" letter-spacing="0.5">11</text>
<text x="1172" y="300" font-size="9" fill="#000" text-anchor="start" font-weight="normal" class="st" letter-spacing="0.6">SH_CP</text>
<rect x="1139" y="308" width="26" height="2" fill="#800000" />
<rect x="1154" y="300" width="5" height="5" fill="#4040ff" />
<text x="1152.5" y="307" font-size="9.2" fill="#000" text-anchor="end" font-weight="normal" class="st" letter-spacing="0.5">14</text>
<text x="1172" y="313" font-size="9" fill="#000" text-anchor="start" font-weight="normal" class="st" letter-spacing="0.6">DS</text>
<rect x="1139" y="333" width="26" height="2" fill="#800000" />
<rect x="1154" y="325" width="5" height="5" fill="#4040ff" />
<text x="1152.5" y="332" font-size="9.2" fill="#000" text-anchor="end" font-weight="normal" class="st" letter-spacing="0.5">12</text>
<text x="1172" y="338" font-size="9" fill="#000" text-anchor="start" font-weight="normal" class="st" letter-spacing="0.6">ST_CP</text>
<rect x="1139" y="384" width="26" height="2" fill="#800000" />
<rect x="1154" y="376" width="5" height="5" fill="#ff4040" />
<text x="1152.5" y="383" font-size="9.2" fill="#000" text-anchor="end" font-weight="normal" class="st" letter-spacing="0.5">10</text>
<text x="1172" y="389" font-size="9" fill="#000" text-anchor="start" font-weight="normal" class="st" letter-spacing="0.6">MR</text>
<rect x="1139" y="397" width="26" height="2" fill="#800000" />
<rect x="1154" y="389" width="5" height="5" fill="#4040ff" />
<text x="1152.5" y="396" font-size="9.2" fill="#000" text-anchor="end" font-weight="normal" class="st" letter-spacing="0.5">13</text>
<text x="1172" y="402" font-size="9" fill="#000" text-anchor="start" font-weight="normal" class="st" letter-spacing="0.6">OE</text>
<polyline points="1166,292 1170,296 1166,300" fill="none" stroke="#800000" stroke-width="1.5" />
<polyline points="1166,330 1170,334 1166,338" fill="none" stroke="#800000" stroke-width="1.5" />
<rect x="1172" y="379" width="15" height="1" fill="#000" />
<rect x="1172" y="392" width="15" height="1" fill="#000" />
<rect x="1267" y="295" width="27" height="2" fill="#800000" />
<rect x="1272" y="287" width="5" height="5" fill="#4040ff" />
<text x="1279" y="294" font-size="9.2" fill="#000" text-anchor="start" font-weight="normal" class="st" letter-spacing="0.5">15</text>
<text x="1260" y="300" font-size="9" fill="#000" text-anchor="end" font-weight="normal" class="st" letter-spacing="0.6">Q0</text>
<rect x="1267" y="308" width="27" height="2" fill="#800000" />
<rect x="1272" y="300" width="5" height="5" fill="#4040ff" />
<text x="1279" y="307" font-size="9.2" fill="#000" text-anchor="start" font-weight="normal" class="st" letter-spacing="0.5">1</text>
<text x="1260" y="313" font-size="9" fill="#000" text-anchor="end" font-weight="normal" class="st" letter-spacing="0.6">Q1</text>
<rect x="1267" y="320" width="27" height="2" fill="#800000" />
<rect x="1272" y="312" width="5" height="5" fill="#4040ff" />
<text x="1279" y="319" font-size="9.2" fill="#000" text-anchor="start" font-weight="normal" class="st" letter-spacing="0.5">2</text>
<text x="1260" y="325" font-size="9" fill="#000" text-anchor="end" font-weight="normal" class="st" letter-spacing="0.6">Q2</text>
<rect x="1267" y="333" width="27" height="2" fill="#800000" />
<rect x="1272" y="325" width="5" height="5" fill="#4040ff" />
<text x="1279" y="332" font-size="9.2" fill="#000" text-anchor="start" font-weight="normal" class="st" letter-spacing="0.5">3</text>
<text x="1260" y="338" font-size="9" fill="#000" text-anchor="end" font-weight="normal" class="st" letter-spacing="0.6">Q3</text>
<rect x="1267" y="346" width="27" height="2" fill="#800000" />
<rect x="1272" y="338" width="5" height="5" fill="#4040ff" />
<text x="1279" y="345" font-size="9.2" fill="#000" text-anchor="start" font-weight="normal" class="st" letter-spacing="0.5">4</text>
<text x="1260" y="351" font-size="9" fill="#000" text-anchor="end" font-weight="normal" class="st" letter-spacing="0.6">Q4</text>
<rect x="1267" y="359" width="27" height="2" fill="#800000" />
<rect x="1272" y="351" width="5" height="5" fill="#4040ff" />
<text x="1279" y="358" font-size="9.2" fill="#000" text-anchor="start" font-weight="normal" class="st" letter-spacing="0.5">5</text>
<text x="1260" y="364" font-size="9" fill="#000" text-anchor="end" font-weight="normal" class="st" letter-spacing="0.6">Q5</text>
<rect x="1267" y="371" width="27" height="2" fill="#800000" />
<rect x="1272" y="363" width="5" height="5" fill="#4040ff" />
<text x="1279" y="370" font-size="9.2" fill="#000" text-anchor="start" font-weight="normal" class="st" letter-spacing="0.5">6</text>
<text x="1260" y="376" font-size="9" fill="#000" text-anchor="end" font-weight="normal" class="st" letter-spacing="0.6">Q6</text>
<rect x="1267" y="384" width="27" height="2" fill="#800000" />
<rect x="1272" y="376" width="5" height="5" fill="#4040ff" />
<text x="1279" y="383" font-size="9.2" fill="#000" text-anchor="start" font-weight="normal" class="st" letter-spacing="0.5">7</text>
<text x="1260" y="389" font-size="9" fill="#000" text-anchor="end" font-weight="normal" class="st" letter-spacing="0.6">Q7</text>
<rect x="1267" y="396" width="27" height="2" fill="#800000" />
<rect x="1272" y="388" width="5" height="5" fill="#4040ff" />
<text x="1279" y="395" font-size="9.2" fill="#000" text-anchor="start" font-weight="normal" class="st" letter-spacing="0.5">9</text>
<text x="1260" y="401" font-size="9" fill="#000" text-anchor="end" font-weight="normal" class="st" letter-spacing="0.6">Q7'</text>
<text x="1164" y="421" font-size="9.5" fill="#000" text-anchor="start" font-weight="normal" class="st" letter-spacing="0.6">74HC595</text>
<text x="1165" y="434" font-size="9" fill="#868686" letter-spacing="1" class="st">&lt;TEXT&gt;</text>
<polygon points="1127,246 1121,257 1134,257" fill="none" stroke="#003e00" stroke-width="2" />
<rect x="1126" y="257" width="2" height="129" fill="#003e00" />
<rect x="1126" y="384" width="13" height="2" fill="#003e00" />
<rect x="1126" y="397" width="13" height="2" fill="#003e00" />
<rect x="1126" y="397" width="2" height="27" fill="#003e00" />
<rect x="1114" y="422" width="27" height="2" fill="#003e00" />
<rect x="1120" y="428" width="15" height="2" fill="#003e00" />
<rect x="1125" y="434" width="5" height="2" fill="#003e00" />
<rect x="1292" y="295" width="15" height="2" fill="#003e00" />
<rect x="1305" y="295" width="13" height="2" fill="#800000" />
<rect x="1301" y="287" width="6" height="6" fill="#4040ff" />
<rect x="1316" y="290" width="41" height="12" fill="#800000" />
<rect x="1318" y="292" width="37" height="8" fill="#c8c8a8" />
<rect x="1356" y="295" width="14" height="2" fill="#800000" />
<rect x="1368" y="295" width="14" height="2" fill="#003e00" />
<rect x="1380" y="295" width="14" height="2" fill="#800000" />
<rect x="1292" y="308" width="15" height="2" fill="#003e00" />
<rect x="1305" y="308" width="13" height="2" fill="#800000" />
<rect x="1301" y="300" width="6" height="6" fill="#4040ff" />
<rect x="1316" y="303" width="41" height="12" fill="#800000" />
<rect x="1318" y="305" width="37" height="8" fill="#c8c8a8" />
<rect x="1356" y="308" width="14" height="2" fill="#800000" />
<rect x="1368" y="308" width="14" height="2" fill="#003e00" />
<rect x="1380" y="308" width="14" height="2" fill="#800000" />
<rect x="1292" y="320" width="15" height="2" fill="#003e00" />
<rect x="1305" y="320" width="13" height="2" fill="#800000" />
<rect x="1301" y="312" width="6" height="6" fill="#4040ff" />
<rect x="1316" y="315" width="41" height="12" fill="#800000" />
<rect x="1318" y="317" width="37" height="8" fill="#c8c8a8" />
<rect x="1356" y="320" width="14" height="2" fill="#800000" />
<rect x="1368" y="320" width="14" height="2" fill="#003e00" />
<rect x="1380" y="320" width="14" height="2" fill="#800000" />
<rect x="1292" y="333" width="15" height="2" fill="#003e00" />
<rect x="1305" y="333" width="13" height="2" fill="#800000" />
<rect x="1301" y="325" width="6" height="6" fill="#4040ff" />
<rect x="1316" y="328" width="41" height="12" fill="#800000" />
<rect x="1318" y="330" width="37" height="8" fill="#c8c8a8" />
<rect x="1356" y="333" width="14" height="2" fill="#800000" />
<rect x="1368" y="333" width="14" height="2" fill="#003e00" />
<rect x="1380" y="333" width="14" height="2" fill="#800000" />
<rect x="1292" y="346" width="15" height="2" fill="#003e00" />
<rect x="1305" y="346" width="13" height="2" fill="#800000" />
<rect x="1301" y="338" width="6" height="6" fill="#4040ff" />
<rect x="1316" y="341" width="41" height="12" fill="#800000" />
<rect x="1318" y="343" width="37" height="8" fill="#c8c8a8" />
<rect x="1356" y="346" width="14" height="2" fill="#800000" />
<rect x="1368" y="346" width="14" height="2" fill="#003e00" />
<rect x="1380" y="346" width="14" height="2" fill="#800000" />
<rect x="1292" y="359" width="15" height="2" fill="#003e00" />
<rect x="1305" y="359" width="13" height="2" fill="#800000" />
<rect x="1301" y="351" width="6" height="6" fill="#4040ff" />
<rect x="1316" y="354" width="41" height="12" fill="#800000" />
<rect x="1318" y="356" width="37" height="8" fill="#c8c8a8" />
<rect x="1356" y="359" width="14" height="2" fill="#800000" />
<rect x="1368" y="359" width="14" height="2" fill="#003e00" />
<rect x="1380" y="359" width="14" height="2" fill="#800000" />
<rect x="1292" y="371" width="15" height="2" fill="#003e00" />
<rect x="1305" y="371" width="13" height="2" fill="#800000" />
<rect x="1301" y="363" width="6" height="6" fill="#4040ff" />
<rect x="1316" y="366" width="41" height="12" fill="#800000" />
<rect x="1318" y="368" width="37" height="8" fill="#c8c8a8" />
<rect x="1356" y="371" width="14" height="2" fill="#800000" />
<rect x="1368" y="371" width="14" height="2" fill="#003e00" />
<rect x="1380" y="371" width="14" height="2" fill="#800000" />
<rect x="1292" y="384" width="15" height="2" fill="#003e00" />
<rect x="1305" y="384" width="13" height="2" fill="#800000" />
<rect x="1301" y="376" width="6" height="6" fill="#4040ff" />
<rect x="1316" y="379" width="41" height="12" fill="#800000" />
<rect x="1318" y="381" width="37" height="8" fill="#c8c8a8" />
<rect x="1356" y="384" width="14" height="2" fill="#800000" />
<text transform="translate(1317,286.0) scale(0.8,1)" x="0" y="0" font-size="16.5" fill="#000" letter-spacing="1.5" class="st">R2</text>
<text transform="translate(1317,298.7) scale(0.8,1)" x="0" y="0" font-size="16.5" fill="#000" letter-spacing="1.5" class="st">R3</text>
<text transform="translate(1317,311.4) scale(0.8,1)" x="0" y="0" font-size="16.5" fill="#000" letter-spacing="1.5" class="st">R4</text>
<text transform="translate(1317,324.1) scale(0.8,1)" x="0" y="0" font-size="16.5" fill="#000" letter-spacing="1.5" class="st">R5</text>
<text transform="translate(1317,336.8) scale(0.8,1)" x="0" y="0" font-size="16.5" fill="#000" letter-spacing="1.5" class="st">R6</text>
<text transform="translate(1317,349.5) scale(0.8,1)" x="0" y="0" font-size="16.5" fill="#000" letter-spacing="1.5" class="st">R7</text>
<text transform="translate(1317,362.2) scale(0.8,1)" x="0" y="0" font-size="16.5" fill="#000" letter-spacing="1.5" class="st">R8</text>
<text transform="translate(1317,374.9) scale(0.8,1)" x="0" y="0" font-size="16.5" fill="#000" letter-spacing="1.5" class="st">R9</text>
<text x="1317" y="401" font-size="9" fill="#000" text-anchor="start" font-weight="bold" class="st" >1k</text>
<text x="1318" y="401" font-size="9" fill="#868686" letter-spacing="1" class="st">&lt;TEXT&gt;</text>
<text x="1318" y="414" font-size="9" fill="#868686" letter-spacing="1" class="st">&lt;TEXT&gt;</text>
<rect x="1392" y="282" width="85" height="123" fill="#800000" />
<rect x="1394" y="284" width="81" height="119" fill="#400000" />
<polygon points="1420,296 1452,296 1458,300 1453,305 1419,305 1414,300" fill="#600000" stroke="none" stroke-width="0" />
<polygon points="1412,301 1418,306 1416,337 1412,342 1407,338 1409,305" fill="#600000" stroke="none" stroke-width="0" />
<polygon points="1459,301 1463,305 1461,338 1456,342 1452,337 1454,306" fill="#600000" stroke="none" stroke-width="0" />
<polygon points="1418,339 1451,339 1456,343 1451,348 1417,348 1412,343" fill="#600000" stroke="none" stroke-width="0" />
<polygon points="1411,344 1416,349 1414,380 1409,385 1406,381 1407,348" fill="#600000" stroke="none" stroke-width="0" />
<polygon points="1456,344 1461,348 1459,381 1454,385 1450,380 1452,349" fill="#600000" stroke="none" stroke-width="0" />
<polygon points="1415,382 1449,382 1454,386 1448,391 1418,391 1412,386" fill="#600000" stroke="none" stroke-width="0" />
<rect x="1468" y="404" width="2" height="15" fill="#800000" />
<rect x="1468" y="417" width="2" height="20" fill="#003e00" />
<rect x="1456" y="435" width="27" height="2" fill="#003e00" />
<rect x="1462" y="441" width="15" height="2" fill="#003e00" />
<rect x="1467" y="447" width="5" height="2" fill="#003e00" />
<rect x="1460" y="414" width="6" height="6" fill="#4040ff" />
<rect x="1049" y="486" width="2" height="13" fill="#800000" />
<rect x="1044" y="497" width="12" height="40" fill="#800000" />
<rect x="1046" y="499" width="8" height="36" fill="#c8c8a8" />
<rect x="1049" y="537" width="2" height="14" fill="#800000" />
<rect x="1049" y="549" width="2" height="15" fill="#003e00" />
<rect x="1041" y="482" width="6" height="6" fill="#4040ff" />
<rect x="1041" y="546" width="6" height="6" fill="#4040ff" />
<rect x="1062" y="486" width="2" height="13" fill="#800000" />
<rect x="1057" y="497" width="12" height="40" fill="#800000" />
<rect x="1059" y="499" width="8" height="36" fill="#c8c8a8" />
<rect x="1062" y="537" width="2" height="14" fill="#800000" />
<rect x="1062" y="549" width="2" height="15" fill="#003e00" />
<rect x="1054" y="482" width="6" height="6" fill="#4040ff" />
<rect x="1054" y="546" width="6" height="6" fill="#4040ff" />
<rect x="1075" y="486" width="2" height="13" fill="#800000" />
<rect x="1070" y="497" width="12" height="40" fill="#800000" />
<rect x="1072" y="499" width="8" height="36" fill="#c8c8a8" />
<rect x="1075" y="537" width="2" height="14" fill="#800000" />
<rect x="1075" y="549" width="2" height="15" fill="#003e00" />
<rect x="1067" y="482" width="6" height="6" fill="#4040ff" />
<rect x="1067" y="546" width="6" height="6" fill="#4040ff" />
<rect x="1049" y="562" width="28" height="2" fill="#003e00" />
<rect x="1048" y="561" width="5" height="5" fill="#003e00" />
<rect x="1061" y="561" width="5" height="5" fill="#003e00" />
<rect x="1049" y="562" width="2" height="26" fill="#003e00" />
<rect x="1037" y="586" width="27" height="2" fill="#003e00" />
<rect x="1043" y="592" width="15" height="2" fill="#003e00" />
<rect x="1048" y="598" width="5" height="2" fill="#003e00" />
<text transform="translate(1076,512) scale(0.8,1)" x="0" y="0" font-size="16.5" fill="#000" letter-spacing="1.5" class="st">R10</text>
<text transform="translate(1088,512) scale(0.8,1)" x="0" y="0" font-size="16.5" fill="#000" letter-spacing="1.5" class="st">R11</text>
<text x="1076" y="527" font-size="9" fill="#000" text-anchor="start" font-weight="bold" class="st" >1k</text>
<text x="1089" y="527" font-size="9" fill="#000" text-anchor="start" font-weight="bold" class="st" >1k</text>
<text x="1067" y="541" font-size="9" fill="#868686" letter-spacing="1" class="st">&lt;TEXT&gt;</text>
<text x="1080" y="541" font-size="9" fill="#868686" letter-spacing="1" class="st">&lt;TEXT&gt;</text>
<rect x="1316" y="485" width="116" height="103" fill="#800000" />
<rect x="1318" y="487" width="112" height="99" fill="#c8c8a8" />
<rect x="1292" y="497" width="25" height="2" fill="#800000" />
<text x="1323" y="502" font-size="10" fill="#000" text-anchor="start" font-weight="normal" class="st" >A</text>
<rect x="1292" y="523" width="25" height="2" fill="#800000" />
<text x="1323" y="528" font-size="10" fill="#000" text-anchor="start" font-weight="normal" class="st" >B</text>
<rect x="1292" y="548" width="25" height="2" fill="#800000" />
<text x="1323" y="553" font-size="10" fill="#000" text-anchor="start" font-weight="normal" class="st" >C</text>
<rect x="1292" y="574" width="25" height="2" fill="#800000" />
<text x="1323" y="579" font-size="10" fill="#000" text-anchor="start" font-weight="normal" class="st" >D</text>
<rect x="1349" y="505" width="71" height="64" fill="#002000" />
<rect x="1352.0" y="505" width="1" height="64" fill="#003c00" />
<rect x="1358.5" y="505" width="1" height="64" fill="#003c00" />
<rect x="1365.0" y="505" width="1" height="64" fill="#003c00" />
<rect x="1371.5" y="505" width="1" height="64" fill="#003c00" />
<rect x="1378.0" y="505" width="1" height="64" fill="#003c00" />
<rect x="1384.5" y="505" width="1" height="64" fill="#003c00" />
<rect x="1391.0" y="505" width="1" height="64" fill="#003c00" />
<rect x="1397.5" y="505" width="1" height="64" fill="#003c00" />
<rect x="1404.0" y="505" width="1" height="64" fill="#003c00" />
<rect x="1410.5" y="505" width="1" height="64" fill="#003c00" />
<rect x="1417.0" y="505" width="1" height="64" fill="#003c00" />
<rect x="1349" y="508.0" width="71" height="1" fill="#003c00" />
<rect x="1349" y="514.5" width="71" height="1" fill="#003c00" />
<rect x="1349" y="521.0" width="71" height="1" fill="#003c00" />
<rect x="1349" y="527.5" width="71" height="1" fill="#003c00" />
<rect x="1349" y="534.0" width="71" height="1" fill="#003c00" />
<rect x="1349" y="540.5" width="71" height="1" fill="#003c00" />
<rect x="1349" y="547.0" width="71" height="1" fill="#003c00" />
<rect x="1349" y="553.5" width="71" height="1" fill="#003c00" />
<rect x="1349" y="560.0" width="71" height="1" fill="#003c00" />
<rect x="1349" y="566.5" width="71" height="1" fill="#003c00" />
<polyline points="1349,517 1355,517 1355,510 1361,510 1361,517 1368,517 1368,510 1374,510 1374,517 1381,517 1381,510 1387,510 1387,517 1394,517 1394,510 1400,510 1400,517 1407,517 1407,510 1413,510 1413,517 1420,517" fill="none" stroke="#ffff00" stroke-width="2" />
<polyline points="1349,549 1355,549 1355,541 1361,541 1361,549 1368,549 1368,541 1374,541 1374,549 1381,549 1381,541 1387,541 1387,549 1394,549 1394,541 1400,541 1400,549 1407,549 1407,541 1413,541 1413,549 1420,549" fill="none" stroke="#ff0000" stroke-width="2" />
<polyline points="1349,532 1354,525 1359,532 1364,525 1369,532 1374,525 1379,532 1384,525 1389,532 1394,525 1399,532 1404,525 1409,532 1414,525 1419,532" fill="none" stroke="#0000ff" stroke-width="2" />
<polyline points="1349.0,557.5062625334899 1349.5,557.6772232597358 1350.0,558.066794439684 1350.5,558.6383111924954 1351.0,559.3379846479505 1351.5,560.0999643397137 1352.0,560.8525357877656 1352.5,561.5248699783447 1353.0,562.0536895073444 1353.5,562.3892239964255 1354.0,562.4998942819002 1354.5,562.3752845192752 1355.0,562.0271224808633 1355.5,561.4881757847743 1356.0,560.8091679377969 1356.5,560.054004441877 1357.0,559.2937582639516 1357.5,558.5999807326529 1358.0,558.0379674135236 1358.5,557.6606127516269 1359.0,557.5034318579997 1359.5,557.581217969492 1360.0,557.8866501685012 1360.5,558.3909823984463 1361.0,559.0467489276047 1361.5,559.7922316338783 1362.0,560.5572686675201 1362.5,561.2698578037258 1363.0,561.862933003961 1363.5,562.2806764031868 1364.0,562.4837716639987 1364.5,562.4531042730036 1365.0,562.1915605223462 1365.5,561.72375586344 1366.0,561.0937181991629 1366.5,560.3607441537878 1367.0,559.5938183119429 1367.5,558.8651206655043 1368.0,558.2432333215414 1368.5,557.7866858287875 1369.0,557.5384466106807 1369.5,557.5218789492601 1370.0,557.7385421265337 1370.5,558.1680446710947 1371.0,558.7699635218257 1371.5,559.4876484846858 1372.0,560.2535539223235 1372.5,560.9955958792243 1373.0,561.6439363352067 1373.5,562.1375560804693 1374.0,562.4299975994884 1374.5,562.4937374665101 1375.0,562.3227767402642 1375.5,561.933205560316 1376.0,561.3616888075046 1376.5,560.6620153520495 1377.0,559.9000356602863 1377.5,559.1474642122344 1378.0,558.4751300216553 1378.5,557.9463104926556 1379.0,557.6107760035745 1379.5,557.5001057180998 1380.0,557.6247154807248 1380.5,557.9728775191367 1381.0,558.5118242152257 1381.5,559.1908320622031 1382.0,559.945995558123 1382.5,560.7062417360484 1383.0,561.4000192673471 1383.5,561.9620325864764 1384.0,562.3393872483731 1384.5,562.4965681420003 1385.0,562.418782030508 1385.5,562.1133498314988 1386.0,561.6090176015537 1386.5,560.9532510723953 1387.0,560.2077683661217 1387.5,559.4427313324799 1388.0,558.7301421962742 1388.5,558.137066996039 1389.0,557.7193235968132 1389.5,557.5162283360013 1390.0,557.5468957269964 1390.5,557.8084394776538 1391.0,558.27624413656 1391.5,558.9062818008371 1392.0,559.6392558462122 1392.5,560.4061816880571 1393.0,561.1348793344957 1393.5,561.7567666784586 1394.0,562.2133141712125 1394.5,562.4615533893193 1395.0,562.4781210507399 1395.5,562.2614578734663 1396.0,561.8319553289053 1396.5,561.2300364781743 1397.0,560.5123515153142 1397.5,559.7464460776765 1398.0,559.0044041207757 1398.5,558.3560636647933 1399.0,557.8624439195307 1399.5,557.5700024005116 1400.0,557.5062625334899 1400.5,557.6772232597358 1401.0,558.066794439684 1401.5,558.6383111924954 1402.0,559.3379846479505 1402.5,560.0999643397137 1403.0,560.8525357877656 1403.5,561.5248699783447 1404.0,562.0536895073444 1404.5,562.3892239964255 1405.0,562.4998942819002 1405.5,562.3752845192752 1406.0,562.0271224808633 1406.5,561.4881757847743 1407.0,560.8091679377969 1407.5,560.054004441877 1408.0,559.2937582639516 1408.5,558.5999807326529 1409.0,558.0379674135236 1409.5,557.6606127516269 1410.0,557.5034318579997 1410.5,557.581217969492 1411.0,557.8866501685012 1411.5,558.3909823984463 1412.0,559.0467489276047 1412.5,559.7922316338783 1413.0,560.5572686675201 1413.5,561.2698578037258 1414.0,561.862933003961 1414.5,562.2806764031868 1415.0,562.4837716639987 1415.5,562.4531042730036 1416.0,562.1915605223462 1416.5,561.72375586344 1417.0,561.0937181991629 1417.5,560.3607441537878 1418.0,559.5938183119429 1418.5,558.8651206655043 1419.0,558.2432333215414 1419.5,557.7866858287875 1420.0,557.5384466106807" fill="none" stroke="#00ff00" stroke-width="2" />
</svg>
<div class="abs" style="left:0;top:0;width:108px;height:850px;background:#fff"></div>
<div class="abs" style="left:0;top:0;width:108px;height:88px;background:#deded0"></div>
<svg class="abs" style="left:0;top:0" width="100" height="36"><g fill="#000"><rect x="28" y="12" width="1" height="14"/><rect x="34" y="12" width="1" height="14"/><rect x="28" y="13" width="7" height="1"/><rect x="27" y="24" width="8" height="3"/><rect x="35" y="24" width="4" height="2"/><path d="M27 10l2-1 0 3z"/><path d="M30 29l2 1-2 1z"/><rect x="40" y="23" width="1" height="12"/><rect x="55" y="23" width="1" height="12"/><rect x="40" y="23" width="16" height="1"/><rect x="51" y="4" width="1" height="19"/><path d="M50 3l2 2-2 2z"/><path d="M52 8l1 2-1 1z"/><rect x="62" y="11" width="8" height="1"/><rect x="62" y="13" width="8" height="2"/><rect x="62" y="13" width="3" height="22"/><rect x="68" y="24" width="1" height="9"/><rect x="71" y="10" width="11" height="1"/><rect x="71" y="17" width="11" height="1"/><rect x="71" y="10" width="1" height="8"/><rect x="81" y="10" width="1" height="8"/><rect x="75" y="12" width="3" height="2"/><rect x="71" y="23" width="8" height="1"/><rect x="71" y="23" width="1" height="12"/><rect x="79" y="23" width="1" height="12"/><rect x="81" y="25" width="1" height="1"/><rect x="81" y="28" width="1" height="1"/><rect x="81" y="31" width="1" height="1"/><rect x="83" y="24" width="4" height="11"/><rect x="89" y="23" width="7" height="12"/></g><rect x="91" y="26" width="2" height="2" fill="#fff"/><rect x="91" y="30" width="2" height="2" fill="#fff"/></svg>
<div class="abs" style="left:98px;top:0;width:1px;height:81px;background:#0000c8"></div>
<div class="abs" style="left:0;top:80px;width:99px;height:1px;background:#0000c8"></div>
<div class="abs" style="left:107px;top:0;width:1px;height:82px;background:#00b000"></div>
<div class="abs" style="left:0;top:81px;width:108px;height:1px;background:#00b000"></div>
<div class="abs" style="left:0;top:88px;width:108px;height:1px;background:#000"></div>
<div class="abs" style="left:0;top:89px;width:108px;height:4px;background:#f0ece8"></div>
<div class="abs" style="left:0;top:93px;width:108px;height:1px;background:#000"></div>
<div class="abs" style="left:0;top:94px;width:108px;height:16px;background:#ece9e3"></div>
<div class="abs" style="left:5px;top:94px;width:1px;height:16px;background:#000"></div>
<div class="abs" style="left:12px;top:97px;width:1px;height:10px;background:#000"></div>
<div class="abs" style="left:12px;top:106px;width:5px;height:1px;background:#000"></div>
<div class="abs" style="left:0;top:111px;width:108px;height:13px;background:#3c78c8"></div>
<div class="abs" style="left:-2px;top:111px;font:11.5px/13px 'Liberation Sans',sans-serif;color:#fff;white-space:nowrap;transform:scaleX(0.85);transform-origin:0 0">S</div>
<div class="abs" style="left:5px;top:111px;font:11.5px/13px 'Liberation Sans',sans-serif;color:#fff;white-space:nowrap;transform:scaleX(0.85);transform-origin:0 0">E</div>
<div class="abs" style="left:12px;top:111px;font:11.5px/13px 'Liberation Sans',sans-serif;color:#fff;white-space:nowrap;transform:scaleX(0.85);transform-origin:0 0">G</div>
<div class="abs" style="left:-3px;top:124px;font:11.5px/13px 'Liberation Sans',sans-serif;color:#000;white-space:nowrap;transform:scaleX(0.85);transform-origin:0 0">4</div>
<div class="abs" style="left:4px;top:124px;font:11.5px/13px 'Liberation Sans',sans-serif;color:#000;white-space:nowrap;transform:scaleX(0.85);transform-origin:0 0">H</div>
<div class="abs" style="left:12px;top:124px;font:11.5px/13px 'Liberation Sans',sans-serif;color:#000;white-space:nowrap;transform:scaleX(0.85);transform-origin:0 0">C</div>
<div class="abs" style="left:0px;top:137px;font:11.5px/13px 'Liberation Sans',sans-serif;color:#000;white-space:nowrap;transform:scaleX(0.85);transform-origin:0 0">U</div>
<div class="abs" style="left:7px;top:137px;font:11.5px/13px 'Liberation Sans',sans-serif;color:#000;white-space:nowrap;transform:scaleX(0.85);transform-origin:0 0">T</div>
<div class="abs" style="left:14px;top:137px;font:11.5px/13px 'Liberation Sans',sans-serif;color:#000;white-space:nowrap;transform:scaleX(0.85);transform-origin:0 0">T</div>
<div class="abs" style="left:0px;top:150px;font:11.5px/13px 'Liberation Sans',sans-serif;color:#000;white-space:nowrap;transform:scaleX(0.85);transform-origin:0 0">E</div>
<div class="abs" style="left:6px;top:150px;font:11.5px/13px 'Liberation Sans',sans-serif;color:#000;white-space:nowrap;transform:scaleX(0.85);transform-origin:0 0">R</div>
<div class="abs" style="left:12px;top:150px;font:11.5px/13px 'Liberation Sans',sans-serif;color:#000;white-space:nowrap;transform:scaleX(0.85);transform-origin:0 0">A</div>
<div class="abs" style="left:0px;top:163px;font:11.5px/13px 'Liberation Sans',sans-serif;color:#000;white-space:nowrap;transform:scaleX(0.85);transform-origin:0 0">R</div>
<div class="abs" style="left:6px;top:163px;font:11.5px/13px 'Liberation Sans',sans-serif;color:#000;white-space:nowrap;transform:scaleX(0.85);transform-origin:0 0">Y</div>
<div class="abs" style="left:12px;top:163px;font:11.5px/13px 'Liberation Sans',sans-serif;color:#000;white-space:nowrap;transform:scaleX(0.85);transform-origin:0 0">S</div>
<div class="abs" style="left:1px;top:176px;font:11.5px/13px 'Liberation Sans',sans-serif;color:#000;white-space:nowrap;transform:scaleX(0.85);transform-origin:0 0">I</div>
<div class="abs" style="left:4px;top:176px;font:11.5px/13px 'Liberation Sans',sans-serif;color:#000;white-space:nowrap;transform:scaleX(0.85);transform-origin:0 0">N</div>
<div class="abs" style="left:11px;top:176px;font:11.5px/13px 'Liberation Sans',sans-serif;color:#000;white-space:nowrap;transform:scaleX(0.85);transform-origin:0 0">F</div>
<div class="abs" style="left:2px;top:189px;font:11.5px/13px 'Liberation Sans',sans-serif;color:#000;white-space:nowrap;transform:scaleX(0.85);transform-origin:0 0">C</div>
<div class="abs" style="left:9px;top:189px;font:11.5px/13px 'Liberation Sans',sans-serif;color:#000;white-space:nowrap;transform:scaleX(0.85);transform-origin:0 0">1</div>
<div class="abs" style="left:13px;top:189px;font:11.5px/13px 'Liberation Sans',sans-serif;color:#000;white-space:nowrap;transform:scaleX(0.85);transform-origin:0 0">6</div>
<div class="abs" style="left:108px;top:0;width:1px;height:850px;background:#000"></div>
<div class="abs" style="left:109px;top:0;width:4px;height:850px;background:#f0ece8"></div>
<div class="abs" style="left:113px;top:0;width:1px;height:850px;background:#000"></div>
<div class="win" style="left:17px;top:34px;width:600px;height:804px"></div>
<div class="abs" style="left:18px;top:35px;width:598px;height:20px;background:linear-gradient(#fbfaf8,#e2ddd7)"></div>
<div class="abs" style="left:18px;top:55px;width:598px;height:1px;background:#a89888"></div>
<div class="ttl" style="left:21px;top:41px">PIC CPU Source Code - U1</div>
<div class="abs" style="left:22px;top:57px;width:443px;height:19px;background:#fff;border:1px solid #7a7a7a;border-top:2px solid #6a6a6a;border-bottom:1px solid #e8e8e8"></div>
<div class="abs" style="left:25px;top:60px;font:12px/14px 'Liberation Sans',sans-serif;white-space:nowrap;transform:scaleX(0.9);transform-origin:0 0">D:\My Documents\MicrochipLAB\My Project 5 - ServoController\ASServoController.c</div>
<div class="abs" style="left:450px;top:58px;width:14px;height:16px;background:#ece9e3;border-right:2px solid #808080;border-bottom:2px solid #808080"></div>
<div class="abs" style="left:453px;top:66px;width:0;height:0;border-left:4px solid transparent;border-right:4px solid transparent;border-top:4px solid #000"></div>
<div class="code"></div>
<div class="abs" style="left:0;top:0;width:0;height:0"><div class="cl" style="top:85px"><span class="t">----</span> <span class="p">#include &lt;pic.h&gt;</span></div>
<div class="cl" style="top:96px"><span class="t">----</span> __CONFIG( HS &amp; WDTDIS &amp; PWRTEN &amp; BOREN &amp; LVPDIS &amp; DUNPROT &amp; DEBUGEN &amp; UNPROTECT );</div>
<div class="cl" style="top:107px"><span class="t">----</span> <span class="k">char</span> index=<span class="n">0</span>;</div>
<div class="cl" style="top:118px"><span class="t">----</span> </div>
<div class="cl" style="top:129px"><span class="t">----</span> <span class="k">void</span> <span class="m">interrupt</span> fun(<span class="k">void</span>)</div>
<div class="cl" style="top:140px"><span class="t">----</span> {</div>
<div class="cl" style="top:151px"><span class="a">000C</span>         <span class="k">if</span>(T0IF)                                           <span class="c">//Прерывание TMR0</span></div>
<div class="cl" style="top:162px"><span class="t">----</span>         {</div>
<div class="cl" style="top:173px"><span class="a">000B</span>                 <span class="k">if</span>(index==<span class="n">50</span>)</div>
<div class="cl" style="top:184px"><span class="t">----</span>                 {</div>
<div class="cl" style="top:195px"><span class="a">0012</span>                         SSPBUF=0b00000001; <span class="c">//Записываю байт в SPI</span></div>
<div class="cl" style="top:206px"><span class="a">0014</span>                         PORTD++;</div>
<div class="cl" style="top:217px"><span class="a">0015</span>                         index=<span class="n">0</span>;</div>
<div class="cl" style="top:228px"><span class="t">----</span>                 }</div>
<div class="abs" style="left:24px;top:238px;width:586px;height:11px;background:#808080"></div>
<svg class="abs" style="left:27px;top:238px" width="9" height="11"><path d="M1 1.5L8 5.5L1 9.5Z" fill="#c00000"/></svg>
<div class="cl hl" style="top:239px"><span class="a">0016</span>                 index++;</div>
<div class="cl" style="top:250px"><span class="a">0017</span>                 RB0=<span class="n">0</span>;</div>
<div class="cl" style="top:261px"><span class="a">0018</span>                 TMR0=<span class="n">0x3C</span>;</div>
<div class="cl" style="top:272px"><span class="t">----</span>         }</div>
<div class="cl" style="top:283px"><span class="t">----</span> </div>
<div class="cl" style="top:294px"><span class="a">001A</span>         <span class="k">if</span>(SSPIF)                      <span class="c">//Прерывание от MSSP</span></div>
<div class="cl" style="top:305px"><span class="t">----</span>         {</div>
<div class="cl" style="top:316px"><span class="a">001E</span>                 SSPOV=<span class="n">0</span>;         <span class="c">//Бит переполнения приемника</span></div>
<div class="cl" style="top:327px"><span class="a">001F</span>                       SSPIF=<span class="n">0</span>;          <span class="c">//Сброс флага прерывания от MSSP</span></div>
<div class="cl" style="top:338px"><span class="a">0020</span>                 RB0=<span class="n">1</span>;             <span class="c">//Включение 74HC595</span></div>
<div class="cl" style="top:349px"><span class="t">----</span>         }</div>
<div class="cl" style="top:360px"><span class="t">----</span> }</div>
<div class="cl" style="top:371px"><span class="t">----</span> <span class="k">void</span> main(<span class="k">void</span>)</div>
<div class="cl" style="top:382px"><span class="t">----</span> {</div>
<div class="cl" style="top:393px"><span class="a">002C</span>         TRISD=0b00000000;       <span class="c">//порт D на выход</span></div>
<div class="cl" style="top:404px"><span class="a">002F</span>         TRISB=0b00000000;       <span class="c">//порт B на выход</span></div>
<div class="cl" style="top:415px"><span class="a">0030</span>         PORTD=0b00000000;</div>
<div class="cl" style="top:426px"><span class="a">0032</span>         PORTB=0b00000001;</div>
<div class="cl" style="top:437px"><span class="t">----</span> </div>
<div class="cl" style="top:448px"><span class="a">0034</span>         T0CS=<span class="n">0</span>; <span class="c">//Выбор тактового сигнала для TMR0</span></div>
<div class="cl" style="top:459px"><span class="a">0036</span>         PSA=<span class="n">0</span>;          <span class="c">//Включение предделителя перед TMR0</span></div>
<div class="cl" style="top:470px"><span class="a">0037</span>         PS2=<span class="n">1</span>;          <span class="c">//Коэффициент предделителя 256</span></div>
<div class="cl" style="top:481px"><span class="a">0038</span>         PS1=<span class="n">1</span>;          <span class="c">//</span></div>
<div class="cl" style="top:492px"><span class="a">0039</span>         PS0=<span class="n">1</span>;          <span class="c">//</span></div>
<div class="cl" style="top:503px"><span class="t">----</span> </div>
<div class="cl" style="top:514px"><span class="a">003A</span>         SMP=<span class="n">1</span>;          <span class="c">//Опрос входа в конце периода вывода данных</span></div>
<div class="cl" style="top:525px"><span class="a">003B</span>         CKE=<span class="n">1</span>;          <span class="c">//Передача данных по заднему фронту SCK</span></div>
<div class="cl" style="top:536px"><span class="a">003C</span>         SSPEN=<span class="n">1</span>;        <span class="c">//Включение SPI</span></div>
<div class="cl" style="top:547px"><span class="a">003E</span>         CKP=<span class="n">1</span>;          <span class="c">//Полярность тактового сигнала (высокий уровень)</span></div>
<div class="cl" style="top:558px"><span class="a">003F</span>         SSPM3=<span class="n">0</span>;        <span class="c">//SPI-Master Fosc/4</span></div>
<div class="cl" style="top:569px"><span class="a">0040</span>         SSPM2=<span class="n">0</span>;        <span class="c">//</span></div>
<div class="cl" style="top:580px"><span class="a">0041</span>         SSPM1=<span class="n">0</span>;        <span class="c">//</span></div>
<div class="cl" style="top:591px"><span class="a">0042</span>         SSPM0=<span class="n">0</span>;        <span class="c">//</span></div>
<div class="cl" style="top:602px"><span class="t">----</span> </div>
<div class="cl" style="top:613px"><span class="a">0043</span>         GIE=<span class="n">1</span>;       <span class="c">//Разрешение всех не замаскированных прерываний</span></div>
<div class="cl" style="top:624px"><span class="a">0044</span>         PEIE=<span class="n">1</span>;      <span class="c">//Разрешение прерываний от периферии</span></div>
<div class="cl" style="top:635px"><span class="a">0045</span>         T0IE=<span class="n">1</span>;      <span class="c">//Разрешение прерываний от таймера TMR0</span></div>
<div class="cl" style="top:646px"><span class="a">0046</span>         RBIE=<span class="n">0</span>;      <span class="c">//Запрещение прерываний от порта B</span></div>
<div class="cl" style="top:657px"><span class="a">0047</span>         INTE=<span class="n">0</span>;      <span class="c">//Запрещение внешних прерываний</span></div>
<div class="cl" style="top:668px"><span class="a">0048</span>         SSPIE=<span class="n">1</span>;    <span class="c">//Разрешение прерываний от MSSP</span></div>
<div class="cl" style="top:679px"><span class="t">----</span> </div>
<div class="cl" style="top:690px"><span class="a">004A</span>         TMR0=<span class="n">0x3C</span>;<span class="c">//Задержка прерывания 10млс</span></div>
<div class="cl" style="top:701px"><span class="t">----</span> </div>
<svg class="abs" style="left:38px;top:711px" width="9" height="11"><circle cx="4" cy="5.5" r="3.5" fill="#c00000"/></svg>
<div class="cl" style="top:712px"><span class="a">004D</span>         <span class="k">while</span>(<span class="n">1</span>)</div>
<div class="cl" style="top:723px"><span class="t">----</span>         {</div>
<div class="cl" style="top:734px"><span class="t">----</span>         }</div>
<div class="cl" style="top:745px"><span class="t">----</span> }</div></div>
<div class="abs" style="left:24px;top:816px;width:586px;height:15px;background:#d4cbc0;border-top:1px solid #a89888;border-bottom:1px solid #a89888"></div>
<div class="abs" style="left:24px;top:816px;width:15px;height:15px;background:linear-gradient(#f4f2ee,#e2ddd6);border:1px solid #9c8c7c;border-radius:2px"></div>
<div class="abs" style="left:29px;top:820px;width:0;height:0;border-top:4px solid transparent;border-bottom:4px solid transparent;border-right:4px solid #000"></div>
<div class="abs" style="left:39px;top:816px;width:15px;height:15px;background:linear-gradient(#f4f2ee,#e2ddd6);border:1px solid #9c8c7c;border-left:2px solid #9c8c7c"></div>
<div class="abs" style="left:595px;top:816px;width:15px;height:15px;background:linear-gradient(#f4f2ee,#e2ddd6);border:1px solid #9c8c7c;border-radius:2px"></div>
<div class="abs" style="left:601px;top:820px;width:0;height:0;border-top:4px solid transparent;border-bottom:4px solid transparent;border-left:4px solid #000"></div>
<div class="abs" style="left:598px;top:40px;width:13px;height:13px;border:1px solid #a08c7c;border-radius:3px;background:linear-gradient(#fbfaf8,#e8e4de)"></div><svg class="abs" style="left:598px;top:40px" width="13" height="13"><path d="M3.5 3.5L9.5 9.5M9.5 3.5L3.5 9.5" stroke="#6e6e6e" stroke-width="2"/></svg>
<svg class="abs" style="left:466px;top:56px" width="150" height="22"><rect x="29" y="2" width="1" height="19" fill="#b0aaa0"/><rect x="30" y="2" width="1" height="19" fill="#fff"/><rect x="121" y="2" width="1" height="19" fill="#b0aaa0"/><rect x="122" y="2" width="1" height="19" fill="#fff"/><g fill="#7090a8"><rect x="9" y="4" width="8" height="1"/><rect x="7" y="6" width="7" height="1"/><rect x="10" y="8" width="4" height="1"/><rect x="8" y="10" width="1" height="1"/><rect x="10" y="10" width="3" height="1"/><rect x="7" y="12" width="6" height="1"/><rect x="7" y="15" width="3" height="1"/></g><g fill="none" stroke="#e83800" stroke-width="1.8" stroke-linecap="round"><path d="M18.5 6.5L17 11M17.5 7.5L21.5 10M17.5 7.5L14 9.5M17 11L20 13L19 16.5M17 11L14.5 14L11 16"/></g><circle cx="20" cy="4.5" r="1.8" fill="#e83800"/><path d="M36.5 19.5V16.5H40.5V14.5H48.5V16.5H52.5V19.5Z" fill="#d8d870" stroke="#202020" stroke-width="1"/><path d="M39.5 3.5H42.5L44.5 6.5L48.5 8.5V10.5H42.5V9.5H39.5Z" fill="#c88840" stroke="#302010" stroke-width="1"/><path d="M37 15L40 11.5H50" fill="none" stroke="#d82000" stroke-width="1"/><path d="M48 9L51 11.5L48 14Z" fill="#d82000"/><path d="M57.5 14.5V19.5H72.5V14.5H71.5V17.5H58.5V14.5Z" fill="#d8d870" stroke="#202020" stroke-width="1"/><rect x="59" y="3" width="5" height="4" fill="#5868c0" stroke="#283070" stroke-width="0.6"/><path d="M59.5 7.5H63.5V10L68.5 11.5V14.5H59.5Z" fill="#c88840" stroke="#302010" stroke-width="1"/><path d="M70.5 3V9" stroke="#d82000" stroke-width="1.2"/><path d="M68 7L70.5 10L73 7Z" fill="#d82000"/><path d="M78.5 14.5V19.5H93.5V14.5H92.5V17.5H79.5V14.5Z" fill="#d8d870" stroke="#202020" stroke-width="1"/><rect x="80" y="3" width="5" height="4" fill="#5868c0" stroke="#283070" stroke-width="0.6"/><path d="M80.5 7.5H84.5V10L89.5 11.5V14.5H80.5Z" fill="#c88840" stroke="#302010" stroke-width="1"/><path d="M91.5 11V5" stroke="#d82000" stroke-width="1.2"/><path d="M89 6L91.5 3L94 6Z" fill="#d82000"/><path d="M99 3H104V13L109 16V19H99Z" fill="#b8b4b0"/><path d="M106 7H110V4L115 8.5L110 13V10H106Z" fill="#b8b4b0"/><path d="M128.5 6.5H144" stroke="#303030" stroke-width="1.3"/><path d="M128 6.5L131 4V9Z M144.5 6.5L141.5 4V9Z" fill="#303030"/><circle cx="131.5" cy="14.5" r="3.2" fill="#f07050" stroke="#404040" stroke-width="0.9"/><circle cx="140.7" cy="14.5" r="3.2" fill="#f4f2ee" stroke="#404040" stroke-width="0.9"/></svg>
<div class="win" style="left:637px;top:536px;width:299px;height:300px;background:#ece9e3"></div>
<div class="abs" style="left:638px;top:537px;width:297px;height:20px;background:linear-gradient(#fbfaf8,#e4dfd9)"></div>
<div class="ttl" style="left:641px;top:543px">PIC CPU Variables - U1</div>
<div class="abs" style="left:918px;top:542px;width:13px;height:13px;border:1px solid #a08c7c;border-radius:3px;background:linear-gradient(#fbfaf8,#e8e4de)"></div><svg class="abs" style="left:918px;top:542px" width="13" height="13"><path d="M3.5 3.5L9.5 9.5M9.5 3.5L3.5 9.5" stroke="#6e6e6e" stroke-width="2"/></svg>
<div class="abs" style="left:641px;top:558px;width:292px;height:274px;background:#fffeea;border:1px solid #000;overflow:hidden"><div class="abs" style="left:0;top:40px;width:290px;height:1px;background:#e6e2da"></div><div class="abs" style="left:0;top:59px;width:290px;height:1px;background:#e6e2da"></div><div class="abs" style="left:0;top:78px;width:290px;height:1px;background:#e6e2da"></div><div class="abs" style="left:0;top:97px;width:290px;height:1px;background:#e6e2da"></div><div class="abs" style="left:0;top:116px;width:290px;height:1px;background:#e6e2da"></div><div class="abs" style="left:0;top:135px;width:290px;height:1px;background:#e6e2da"></div><div class="abs" style="left:0;top:154px;width:290px;height:1px;background:#e6e2da"></div><div class="abs" style="left:0;top:173px;width:290px;height:1px;background:#e6e2da"></div><div class="abs" style="left:0;top:192px;width:290px;height:1px;background:#e6e2da"></div><div class="abs" style="left:0;top:211px;width:290px;height:1px;background:#e6e2da"></div><div class="abs" style="left:0;top:230px;width:290px;height:1px;background:#e6e2da"></div><div class="abs" style="left:0;top:249px;width:290px;height:1px;background:#e6e2da"></div><div class="abs" style="left:0;top:268px;width:290px;height:1px;background:#e6e2da"></div><div class="abs" style="left:96px;top:20px;width:1px;height:260px;background:#e6e2da"></div><div class="abs" style="left:192px;top:20px;width:1px;height:260px;background:#e6e2da"></div><div class="abs" style="left:0;top:0;width:290px;height:20px;background:linear-gradient(#f2f0ec,#e6e2dc);border-bottom:2px solid #c9c3b8"></div><div class="abs" style="left:95px;top:2px;width:1px;height:16px;background:#c9c3b8"></div><div class="abs" style="left:96px;top:2px;width:1px;height:16px;background:#fff"></div><div class="abs" style="left:190px;top:2px;width:1px;height:16px;background:#c9c3b8"></div><div class="abs" style="left:191px;top:2px;width:1px;height:16px;background:#fff"></div><div class="abs" style="left:286px;top:2px;width:1px;height:16px;background:#c9c3b8"></div><div class="vt" style="left:6px;top:2px">Name</div><div class="vt" style="left:102px;top:2px">Address</div><div class="vt" style="left:198px;top:2px">Value</div><div class="vt" style="left:22px;top:23px">index</div><div class="vt" style="left:102px;top:23px">0x0020</div><div class="vt" style="left:197px;top:23px">0x09</div></div></body></html>
